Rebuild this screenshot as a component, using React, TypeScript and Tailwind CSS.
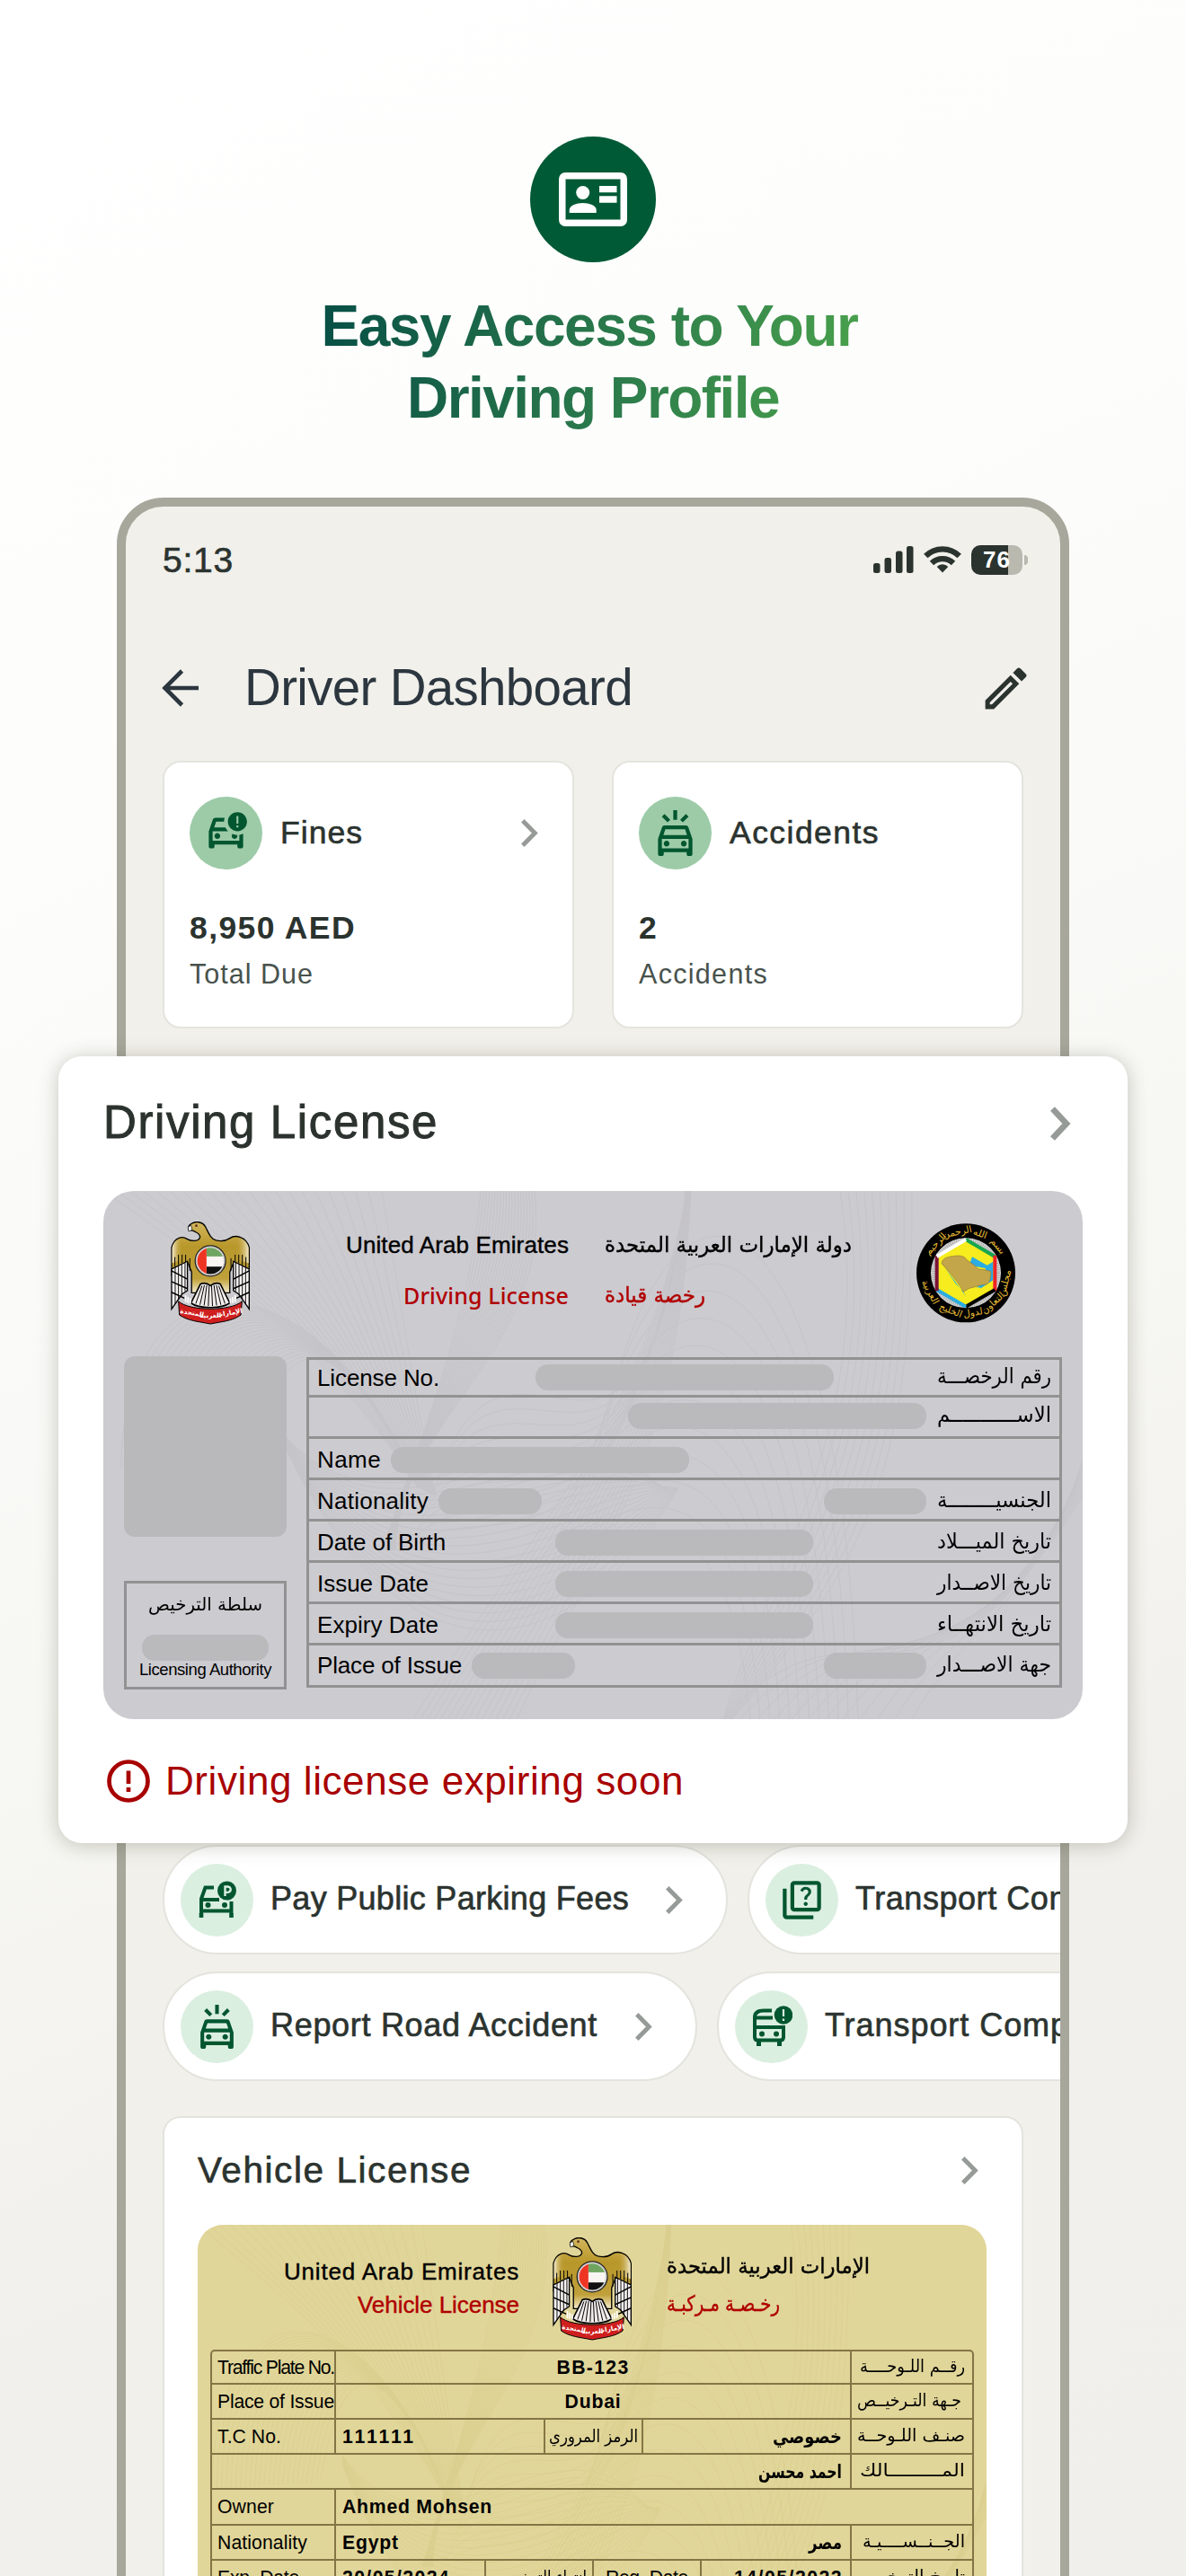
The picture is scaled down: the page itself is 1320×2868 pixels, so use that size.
import React, { useLayoutEffect, useRef } from 'react';
import {
  MdOutlineCarCrash,
  MdOutlineMinorCrash,
  MdOutlineModeEdit,
  MdOutlineQuiz,
} from 'react-icons/md';

const MEDIUM = '[-webkit-text-stroke:1px_currentColor]';
const MEDIUM_MD = '[-webkit-text-stroke:0.65px_currentColor]';
const MEDIUM_SM = '[-webkit-text-stroke:0.4px_currentColor]';

interface FitProps {
  w: number;
  children: string;
  ar?: boolean;
  className?: string;
}

// Sets a line of text to an exact width: tracking for latin, horizontal scale for arabic
// (tracking would break the joined letters).
function Fit({ w, children, ar, className = '' }: FitProps) {
  const ref = useRef<HTMLSpanElement>(null);

  useLayoutEffect(() => {
    const el = ref.current;
    if (!el) return;
    el.style.letterSpacing = '0px';
    el.style.transform = 'none';
    const natural = el.getBoundingClientRect().width;
    if (ar) {
      el.style.transform = `scaleX(${w / natural})`;
    } else {
      el.style.letterSpacing = `${(w - natural) / children.length}px`;
    }
  }, [w, ar, children]);

  return (
    <span className={`block shrink-0 text-left ${className}`} style={{ width: w }}>
      <span
        ref={ref}
        dir={ar ? 'rtl' : 'ltr'}
        className={`inline-block origin-left whitespace-nowrap ${ar ? "font-['DejaVu_Sans',sans-serif]" : ''}`}
      >
        {children}
      </span>
    </span>
  );
}

function Chevron({ w = 19, h = 31, stroke = 4.9 }: { w?: number; h?: number; stroke?: number }) {
  const d = stroke * 0.36;
  return (
    <svg width={w} height={h} viewBox={`0 0 ${w} ${h}`} fill="none" stroke="#969b98" strokeWidth={stroke} className="shrink-0">
      <path d={`M${d} ${d} L${w - stroke * 0.75} ${h / 2} L${d} ${h - d}`} />
    </svg>
  );
}

function IdCardIcon() {
  return (
    <svg width="76" height="60" viewBox="0 0 76 60">
      <rect x="3.75" y="3.75" width="68.5" height="52.5" rx="3.5" fill="none" stroke="#fff" strokeWidth="7.5" />
      <circle cx="26.7" cy="22.5" r="7.5" fill="#fff" />
      <path d="M11.7 45v-3.2c0-5 7.6-7.8 15-7.8s15 2.8 15 7.8V45z" fill="#fff" />
      <path d="M45 15h19.5v7.2H45zM45 26.3h19.5v7.4H45z" fill="#fff" />
    </svg>
  );
}

function ParkingIcon() {
  return (
    <svg width="44" height="42" viewBox="0 0 44 42" fill="none" stroke="#00562f" strokeWidth="4">
      <path d="M18 7.5H8.5L4 20v17M24 21H4M37.500 23v14M4 33.500h34" />
      <path d="M4 36v5M37.500 36v5" strokeWidth="4.6" strokeLinecap="butt" />
      <circle cx="11.500" cy="27" r="3" fill="#00562f" stroke="none" />
      <circle cx="30" cy="27" r="3" fill="#00562f" stroke="none" />
      <circle cx="32.500" cy="11" r="10.500" fill="#00562f" stroke="none" />
      <path d="M30.500 17V6.500h3a3.200 3.200 0 0 1 0 6.400h-3" stroke="#dbefe1" strokeWidth="2.400" />
    </svg>
  );
}

function BusAlertIcon() {
  return (
    <svg width="46" height="46" viewBox="0 0 46 46" fill="none" stroke="#00562f" strokeWidth="4">
      <path d="M23 5.500H14C7 5.500 4 8 4 13v22c0 2.500 1 3.500 3.500 3.500h25c2.500 0 3.500-1 3.500-3.500V24H4M24 13.500H4" />
      <path d="M8.500 38v7M31.500 38v7" strokeWidth="5" />
      <circle cx="12" cy="31.500" r="3" fill="#00562f" stroke="none" />
      <circle cx="28" cy="31.500" r="3" fill="#00562f" stroke="none" />
      <circle cx="36" cy="10.500" r="10.300" fill="#00562f" stroke="none" />
      <path d="M36 4v8M36 14.500v2.500" stroke="#dbefe1" strokeWidth="2.200" />
    </svg>
  );
}

function UaeEmblem() {
  const feathers = [0, 1, 2, 3];
  return (
    <svg width="88" height="115" viewBox="28 31 265 346" preserveAspectRatio="none" className="shrink-0">
      <defs>
        <linearGradient id="gold" x1="0" y1="0" x2="0" y2="1">
          <stop offset="0" stopColor="#d2b65c" />
          <stop offset="0.35" stopColor="#b8972a" />
          <stop offset="0.8" stopColor="#c0a03a" />
          <stop offset="1" stopColor="#f4eccc" />
        </linearGradient>
        <linearGradient id="wingL" x1="0" y1="0" x2="1" y2="0">
          <stop offset="0" stopColor="#f3ebd0" />
          <stop offset="0.7" stopColor="#b8972a" stopOpacity="0" />
        </linearGradient>
        <linearGradient id="wingR" x1="1" y1="0" x2="0" y2="0">
          <stop offset="0" stopColor="#f3ebd0" />
          <stop offset="0.7" stopColor="#b8972a" stopOpacity="0" />
        </linearGradient>
        <clipPath id="flagClip">
          <circle cx="161" cy="163" r="44" />
        </clipPath>
      </defs>
      <path
        d="M98 38C112 28 135 32 144 48C154 66 160 88 180 94C196 98 212 97 226 87C244 74 282 82 291 118V210L238 170L226 200V270H98V200L86 170L31 210V118C40 84 66 78 84 90C98 98 122 98 126 84C128 70 112 68 104 62C98 60 92 62 88 58C86 50 90 42 98 38Z"
        fill="url(#gold)" stroke="#000" strokeWidth="4"
      />
      <path d="M33 170V118C40 88 66 80 84 92V150z" fill="url(#wingL)" />
      <path d="M289 170V118C282 88 250 74 226 90V150z" fill="url(#wingR)" />
      <path d="M86 50l10-6 4 14-12 6z" fill="#fff" stroke="#000" strokeWidth="2" />
      <circle cx="114" cy="45" r="4" fill="#5a2b20" />
      <path d="M42 182v-32M54 176v-34M66 170v-28M78 166v-24M92 196v-42M280 182v-32M268 176v-34M256 170v-28M244 166v-24M230 196v-42" stroke="#000" strokeWidth="3" />
      <path d="M31 190L84 164V262L66 274L31 324zM291 190L238 164V262L256 274L291 324z" fill="#f6f2f2" stroke="#000" strokeWidth="4" />
      {feathers.map((i) => (
        <path key={i} d={`M${43 + i * 11} ${184 - i * 5}V${306 - i * 14}M${279 - i * 11} ${184 - i * 5}V${306 - i * 14}`} stroke="#000" strokeWidth="2.8" />
      ))}
      <path d="M31 196L84 224M31 232L84 256M31 268L74 288M291 196L238 224M291 232L238 256M291 268L248 288" stroke="#000" strokeWidth="4.5" />
      <path d="M128 240C142 234 154 240 161 246C168 240 180 234 194 240L226 304C200 324 122 324 96 304z" fill="#f1ecec" stroke="#000" strokeWidth="5" />
      <path d="M133 246L112 306M141 244L126 310M149 244L140 312M157 246L154 314M165 246L168 314M173 244L182 312M181 244L196 310M189 246L210 306" stroke="#000" strokeWidth="3" />
      <path d="M78 302V278M86 304V284M94 306V288M244 302V278M236 304V284M228 306V288" stroke="#fff" strokeWidth="5" />
      <path d="M54 298C90 332 232 332 267 298L263 344C236 364 200 366 161 374C122 366 86 364 57 344z" fill="#cf1f1f" stroke="#000" strokeWidth="3" />
      <g fill="#fff" fontSize="22" fontWeight="700" fontFamily="DejaVu Sans" textAnchor="middle">
        <text transform="translate(226 344) rotate(-10)">الإمارات</text>
        <text x="161" y="352">العربية</text>
        <text transform="translate(98 344) rotate(10)">المتحدة</text>
      </g>
      <circle cx="161" cy="163" r="51" fill="#ddd" stroke="#222" strokeWidth="4" />
      <g clipPath="url(#flagClip)">
        <rect x="115" y="117" width="92" height="92" fill="#f8f5f2" />
        <rect x="148" y="117" width="60" height="31" fill="#6fa561" />
        <rect x="148" y="182" width="60" height="30" fill="#111" />
        <rect x="115" y="117" width="33" height="92" fill="#ee3524" />
      </g>
      <circle cx="161" cy="163" r="48" fill="none" stroke="#8d8d8d" strokeWidth="3" strokeDasharray="4 5" />
    </svg>
  );
}

const gccTop: [string, number][] = [['بسم', 50], ['الله', 20], ['الرحمن', -12], ['الرحيم', -46]];
const gccBottom: [string, number][] = [['مجلس', -76], ['التعاون', -42], ['لدول', -10], ['الخليج', 22], ['العربية', 62]];

function GccEmblem() {
  return (
    <svg width="110" height="111" viewBox="0 0 330 333">
      <circle cx="165" cy="166" r="165" fill="#000" />
      <circle cx="165" cy="166" r="117" fill="#d5d5d5" />
      <circle cx="165" cy="166" r="108" fill="none" stroke="#a8a8a8" strokeWidth="12" strokeDasharray="3 4" />
      <path d="M165 55L262 111V222L165 277L68 222V111z" fill="#f7ec1d" />
      <path d="M76 136L96 150L150 222L168 250L216 216L256 190V128L236 140L186 112L176 140L230 150L236 180L200 216L160 232L130 200L96 150z" fill="#2bace2" />
      <path d="M84 134C86 118 100 112 122 110C142 106 160 108 168 122L196 142C204 154 214 154 222 154L248 160C250 180 244 200 234 204C214 204 200 212 184 216C174 214 164 228 156 228C146 206 130 188 112 166z" fill="#c3a54a" stroke="#8b7a3c" strokeWidth="2" />
      <path d="M158 230L186 216L212 214L216 226L192 244L168 256z" fill="#f7ec1d" />
      <g fill="none" strokeWidth="12">
        <path d="M165 54L262 111" stroke="#18a650" />
        <path d="M262 107V226" stroke="#ee2329" />
        <path d="M262 222L165 278" stroke="#000" />
        <path d="M165 278L68 222" stroke="#2bace2" />
        <path d="M68 226V107" stroke="#7a1338" />
        <path d="M68 111L165 54" stroke="#fff" />
      </g>
      <g fill="#e6bb35" fontFamily="DejaVu Sans" fontSize="32" textAnchor="middle">
        {gccTop.map(([word, deg]) => (
          <text key={word} x="165" y="36" transform={`rotate(${deg} 165 166)`}>{word}</text>
        ))}
        {gccBottom.map(([word, deg]) => (
          <text key={word} x="165" y="311" transform={`rotate(${deg} 165 166)`}>{word}</text>
        ))}
      </g>
    </svg>
  );
}

// Each family blends one bezier into another, eight numbers per curve.
const GUILLOCHE: [number[], number[], number][] = [
  [[0, 0, 160, 110, 260, 190, 350, 330], [310, 0, 330, 120, 350, 250, 370, 340], 22],
  [[20, 310, 20, 60, 240, 60, 350, 330], [170, 300, 200, 130, 270, 160, 350, 330], 24],
  [[420, 0, 410, 130, 360, 260, 310, 400], [480, 0, 500, 180, 330, 250, 325, 400], 20],
  [[380, 300, 460, 100, 600, 420, 648, 0], [340, 400, 420, 320, 560, 500, 652, 0], 10],
  [[560, 260, 620, -60, 820, -60, 840, 588], [480, 420, 640, 340, 700, 380, 720, 588], 12],
  [[650, 0, 600, 260, 500, 340, 345, 588], [654, 0, 640, 300, 560, 380, 460, 588], 16],
  [[200, 270, 330, 420, 500, 200, 620, 330], [200, 280, 330, 560, 520, 540, 640, 330], 20],
  [[820, 0, 860, 260, 740, 420, 690, 588], [900, 0, 900, 300, 860, 400, 700, 588], 10],
  [[900, 588, 960, 480, 1040, 460, 1090, 300], [690, 588, 840, 420, 900, 640, 1090, 340], 12],
];

function Guilloche({ color }: { color: string }) {
  const paths: string[] = [];
  GUILLOCHE.forEach(([a, b, n]) => {
    for (let i = 0; i < n; i++) {
      const p = a.map((v, k) => (v + ((b[k] - v) * i) / (n - 1)).toFixed(1));
      paths.push(`M${p[0]} ${p[1]}C${p.slice(2).join(' ')}`);
    }
  });
  return (
    <svg className="absolute inset-0 h-full w-full" viewBox="0 0 1090 588" preserveAspectRatio="none" fill="none" stroke={color} strokeWidth="1">
      <path d={paths.join('')} />
    </svg>
  );
}

const Blank = ({ w }: { w: number }) => <span className="block h-[29px] shrink-0 rounded-[14px] bg-[#bababc]" style={{ width: w }} />;

interface LicenseRow {
  h: string;
  label?: string;
  labelW?: number;
  ar?: string;
  left?: number;
  mid?: number;
  right?: number;
}

const licenseRows: LicenseRow[] = [
  { h: 'h-[42px]', label: 'License No.', labelW: 136, ar: 'رقم الرخصـــة', mid: 332 },
  { h: 'h-[46px] pb-[2px]', ar: 'الاســـــــــــم', right: 332 },
  { h: 'h-[46px] pt-[3px]', label: 'Name', labelW: 71, left: 332 },
  { h: 'h-[46px] pt-[3px]', label: 'Nationality', labelW: 124, ar: 'الجنسيــــــــة', left: 115, right: 114 },
  { h: 'h-[46px] pt-[3px]', label: 'Date of Birth', labelW: 143, ar: 'تاريخ الميـــلاد', mid: 287 },
  { h: 'h-[46px] pt-[3px]', label: 'Issue Date', labelW: 124, ar: 'تاريخ الاصــدار', mid: 287 },
  { h: 'h-[46px] pt-[3px]', label: 'Expiry Date', labelW: 135, ar: 'تاريخ الانتهــاء', mid: 287 },
  { h: 'h-[44px]', label: 'Place of Issue', labelW: 161, ar: 'جهة الاصـــدار', left: 115, right: 114 },
];

function DrivingLicenseCard() {
  return (
    <div className="relative h-[588px] w-[1090px] overflow-hidden rounded-[34px] bg-[#cccbd0] text-black">
      <Guilloche color="#c5c4c9" />
      <div className="relative flex h-[185px] pt-[34px] pl-[75px]">
        <UaeEmblem />
        <div className="flex w-[355px] flex-col items-end pt-[6px] text-[26px] leading-[56px]">
          <Fit w={248} className={`-mt-[8px] ${MEDIUM_SM}`}>United Arab Emirates</Fit>
          <Fit w={184} className="font-['Noto_Sans'] text-[25px] font-medium text-[#b00000]">Driving License</Fit>
        </div>
        <div className="ml-[40px] w-[347px] pt-[6px] text-[24px] leading-[56px]">
          <Fit ar w={275} className={`-mt-[8px] ${MEDIUM_SM}`}>دولة الإمارات العربية المتحدة</Fit>
          <Fit ar w={112} className={`text-[#b00000] ${MEDIUM_SM}`}>رخصة قيادة</Fit>
        </div>
        <div className="pt-[2px]">
          <GccEmblem />
        </div>
      </div>

      <div className="relative flex items-start gap-[22px] pl-[23px]">
        <div className="w-[181px]">
          <div className="-mt-px h-[201px] rounded-xl bg-[#b9b9bb]" />
          <div className="mt-[49px] flex h-[121px] flex-col items-center border-[3px] border-[#929293] pt-[9px]">
            <Fit ar w={127} className="text-[20px] leading-[28px]">سلطة الترخيص</Fit>
            <span className="mt-5 block h-[29px] w-[141px] rounded-[14px] bg-[#bababc]" />
            <Fit w={147} className="text-[18.5px] leading-[20px]">Licensing Authority</Fit>
          </div>
        </div>

        <div className="w-[841px] border-[3px] border-[#929293] text-[26px]">
          {licenseRows.map((row, i) => (
            <div
              key={i}
              className={`grid grid-cols-[1fr_auto_1fr] items-center pr-[9px] pl-[9px] ${row.h} ${i < licenseRows.length - 1 ? 'border-b-[3px] border-[#929293]' : ''}`}
            >
              <div className="flex items-center gap-[11px]">
                {row.label && <Fit w={row.labelW || 0} className="leading-[38px]">{row.label}</Fit>}
                {row.left && <Blank w={row.left} />}
              </div>
              <div>{row.mid && <Blank w={row.mid} />}</div>
              <div className="flex items-center justify-end gap-3">
                {row.right && <Blank w={row.right} />}
                {row.ar && <Fit ar w={127} className="-mt-[3px] text-[23.5px] leading-[34px]">{row.ar}</Fit>}
              </div>
            </div>
          ))}
        </div>
      </div>
    </div>
  );
}

function DrivingLicenseSheet() {
  return (
    <section className="absolute top-[1176px] left-[65px] h-[876px] w-[1190px] rounded-[26px] bg-white pt-[40px] pl-[50px] shadow-[0_2px_22px_rgba(60,60,40,0.28)]">
      <div className="flex h-[70px] items-center justify-between pr-[63px] text-[51px] text-[#2c332f]">
        <Fit w={373} className={`-mt-[2px] leading-[70px] ${MEDIUM}`}>Driving License</Fit>
        <Chevron w={23} h={38} stroke={6.8} />
      </div>
      <div className="mt-10">
        <DrivingLicenseCard />
      </div>
      <div className="mt-[39px] ml-1 flex h-[60px] items-center gap-[17px] text-[44px] leading-[60px] text-[#a80000]">
        <svg width="48" height="48" viewBox="0 0 48 48" fill="none" stroke="#a80000" strokeWidth="4.7">
          <circle cx="24" cy="24" r="21.5" />
          <path d="M24 12.5v14.5M24 31v5" />
        </svg>
        <Fit w={577}>Driving license expiring soon</Fit>
      </div>
    </section>
  );
}

function StatusBar() {
  return (
    <div className="flex h-[60px] items-center justify-between pr-[36px] pl-[41px] text-[#2b332f]">
      <Fit w={79} className={`pt-[2px] text-[39px] leading-[60px] ${MEDIUM_MD}`}>5:13</Fit>
      <div className="flex items-center">
        <svg width="45" height="30" viewBox="0 0 45 30" fill="#2b332f">
          <rect x="0" y="19" width="7.5" height="11" rx="2.5" />
          <rect x="12.5" y="13" width="7.5" height="17" rx="2.5" />
          <rect x="25" y="5.5" width="7.5" height="24.5" rx="2.5" />
          <rect x="37" y="0" width="7.5" height="30" rx="2.5" />
        </svg>
        <svg className="ml-[11px]" width="42" height="30" viewBox="0 0 42 30" fill="none" stroke="#2b332f" strokeWidth="6.3">
          <path d="M2.3 11a26.5 26.5 0 0 1 37.4 0" />
          <path d="M9 19a17 17 0 0 1 24 0" />
          <path d="M21 29.5l-6.3-6.6a9 9 0 0 1 12.6 0z" fill="#2b332f" stroke="none" />
        </svg>
        <div className="ml-[11px] flex h-[33px] w-[57px] items-center justify-center overflow-hidden rounded-[10px] bg-[linear-gradient(90deg,#2b332f_41px,#b9b9b0_41px)] text-[26px] leading-[33px] font-bold text-white">
          <Fit w={31}>76</Fit>
        </div>
        <div className="ml-[2px] h-[11px] w-[4px] rounded-r-full bg-[#b9b9b0]" />
      </div>
    </div>
  );
}

interface SummaryCardProps {
  icon: React.ReactNode;
  title: string;
  titleW: number;
  value: string;
  valueW: number;
  note: string;
  noteW: number;
  arrow?: boolean;
}

function SummaryCard({ icon, title, titleW, value, valueW, note, noteW, arrow }: SummaryCardProps) {
  return (
    <div className="h-[298px] w-[458px] rounded-[20px] border-2 border-[#e4e4de] bg-white pt-[38px] pl-[28px] text-[#2b332f]">
      <div className="flex h-[81px] items-center pr-[38px]">
        <span className="flex size-[81px] items-center justify-center rounded-full bg-[#9dcba8] text-[#00562f]">{icon}</span>
        <Fit w={titleW} className={`ml-[20px] text-[35.5px] leading-[81px] ${MEDIUM_MD}`}>{title}</Fit>
        <span className="ml-auto">{arrow && <Chevron />}</span>
      </div>
      <Fit w={valueW} className="mt-[45px] text-[35.5px] leading-[40px] font-bold">{value}</Fit>
      <Fit w={noteW} className="mt-[11px] text-[30.5px] leading-[40px] text-[#48524d]">{note}</Fit>
    </div>
  );
}

function ActionPill({ icon, label, labelW, width }: { icon: React.ReactNode; label: string; labelW: number; width: string }) {
  return (
    <div className={`flex h-[122px] shrink-0 items-center rounded-full border-2 border-[#e4e4de] bg-white pr-[48px] pl-[18px] ${width}`}>
      <span className="flex size-[81px] shrink-0 items-center justify-center rounded-full bg-[#dbefe1] text-[#00562f]">{icon}</span>
      <Fit w={labelW} className={`-mt-[3px] ml-[19px] text-[36px] leading-[81px] text-[#2b332f] ${MEDIUM_MD}`}>{label}</Fit>
      <span className="ml-auto"><Chevron /></span>
    </div>
  );
}

const LINE = 'border-[#847545]';

function RowLabel({ w, children }: { w?: number; children?: string }) {
  return (
    <div className={`flex w-[138px] shrink-0 items-center border-r-2 pl-[6px] ${LINE}`}>
      {children && <Fit w={w || 0}>{children}</Fit>}
    </div>
  );
}

function RowLabelAr({ w, children, inset = 'pr-2' }: { w: number; children: string; inset?: string }) {
  return (
    <div className={`flex w-[136px] shrink-0 items-center justify-end border-l-2 pb-[2px] text-[19.5px] ${inset} ${LINE}`}>
      <Fit ar w={w}>{children}</Fit>
    </div>
  );
}

function VehicleLicenseCard() {
  const row = `flex border-b-2 ${LINE}`;
  return (
    <div className="relative h-[560px] w-[878px] overflow-hidden rounded-[28px] bg-[#e1d699] text-black">
      <Guilloche color="#dbcf90" />
      <div className="relative flex h-[139px] pt-[14px]">
        <div className="flex w-[358px] flex-col items-end pt-[20px] text-[26px] leading-[37px]">
          <Fit w={262} className={MEDIUM_SM}>United Arab Emirates</Fit>
          <Fit w={180} className={`text-[#b00000] ${MEDIUM_SM}`}>Vehicle License</Fit>
        </div>
        <div className="ml-[37px]">
          <UaeEmblem />
        </div>
        <div className="ml-[39px] pt-[11px] text-[24px] leading-[42px]">
          <Fit ar w={226} className={MEDIUM_SM}>الإمارات العربية المتحدة</Fit>
          <Fit ar w={126} className={`text-[#b00000] ${MEDIUM_SM}`}>رخـصـة مـركبـة</Fit>
        </div>
      </div>

      <div className={`relative mx-[14px] rounded-[5px] border-2 text-[21.2px] ${LINE}`}>
        <div className={`${row} h-[37px]`}>
          <RowLabel w={130}>Traffic Plate No.</RowLabel>
          <div className="flex flex-1 items-center justify-center font-bold"><Fit w={81}>BB-123</Fit></div>
          <RowLabelAr w={117}>رقــم اللـوحــــة</RowLabelAr>
        </div>
        <div className={`${row} h-[39px]`}>
          <RowLabel w={130}>Place of Issue</RowLabel>
          <div className="flex flex-1 items-center justify-center font-bold"><Fit w={63}>Dubai</Fit></div>
          <RowLabelAr w={116} inset="pr-3">جـهة التـرخيــص</RowLabelAr>
        </div>
        <div className={`${row} h-[39px]`}>
          <RowLabel w={71}>T.C No.</RowLabel>
          <div className={`flex w-[233px] items-center border-r-2 pl-[7px] font-bold ${LINE}`}><Fit w={82}>111111</Fit></div>
          <div className={`flex w-[109px] items-center justify-center border-r-2 text-[19.5px] ${LINE}`}><Fit ar w={99}>الرمز المروري</Fit></div>
          <div className="flex flex-1 items-center justify-end pr-[9px] font-bold"><Fit ar w={77}>خصوصي</Fit></div>
          <RowLabelAr w={120}>صنـف اللـوحــة</RowLabelAr>
        </div>
        <div className={`${row} h-[39px]`}>
          <div className="flex flex-1 items-center justify-end pr-[9px] font-bold"><Fit ar w={93}>احمد محسن</Fit></div>
          <RowLabelAr w={117}>المـــــــــالك</RowLabelAr>
        </div>
        <div className={`${row} h-[40px]`}>
          <RowLabel w={63}>Owner</RowLabel>
          <div className="flex flex-1 items-center pl-[7px] font-bold"><Fit w={167}>Ahmed Mohsen</Fit></div>
        </div>
        <div className={`${row} h-[39px]`}>
          <RowLabel w={100}>Nationality</RowLabel>
          <div className="flex flex-1 items-center pl-[7px] font-bold"><Fit w={63}>Egypt</Fit></div>
          <div className="flex flex-1 items-center justify-end pr-[9px] font-bold"><Fit ar w={37}>مصر</Fit></div>
          <RowLabelAr w={114}>الجــنــســــيـة</RowLabelAr>
        </div>
        <div className={`${row} h-[39px]`}>
          <RowLabel w={91}>Exp. Date</RowLabel>
          <div className={`flex w-[167px] items-center border-r-2 pl-[7px] font-bold ${LINE}`}><Fit w={120}>20/05/2024</Fit></div>
          <div className={`flex w-[120px] items-center justify-end border-r-2 pr-[6px] text-[19.5px] ${LINE}`}><Fit ar w={98}>انتهاء الترخيص</Fit></div>
          <div className={`flex w-[120px] items-center justify-center border-r-2 ${LINE}`}><Fit w={92}>Reg. Date</Fit></div>
          <div className="flex flex-1 items-center justify-end pr-[8px] font-bold"><Fit w={121}>14/05/2022</Fit></div>
          <RowLabelAr w={116}>تاريخ الترخيص</RowLabelAr>
        </div>
      </div>
    </div>
  );
}

export default function App() {
  return (
    <main className="relative h-[2868px] w-[1320px] overflow-hidden bg-[linear-gradient(155deg,#ffffff_0%,#fdfdfc_25%,#f8f9f5_50%,#f2f0ec_75%,#f1efeb_100%)] font-['Liberation_Sans',sans-serif]">
      <header className="flex h-[554px] flex-col items-center pt-[152px]">
        <div className="flex size-[140px] items-center justify-center rounded-full bg-[#005a36]">
          <IdCardIcon />
        </div>
        <h1 className="mt-[31px] mr-[8px] flex flex-col items-center bg-[linear-gradient(100deg,#074f46_0%,#2c7b4b_55%,#4aa24c_100%)] bg-clip-text text-[64px] leading-[80px] font-bold text-transparent">
          <Fit w={597}>Easy Access to Your</Fit>
          <Fit w={414} className="ml-[8px]">Driving Profile</Fit>
        </h1>
      </header>

      <div className="mx-auto h-[2400px] w-[1060px] overflow-hidden rounded-t-[52px] border-[10px] border-[#a7a79c] bg-[#f1f0eb]">
        <div className="mt-[29px]">
          <StatusBar />
        </div>

        <div className="mt-[78px] flex h-[70px] items-center pr-[30px] pl-[40px] text-[#2c363f]">
          <svg width="42" height="42" viewBox="0 0 42 42" fill="none" stroke="#2c363f" strokeWidth="4.6">
            <path d="M41 21H4M22.5 2L3.5 21L22.5 40" />
          </svg>
          <Fit w={432} className="ml-[50px] text-[56.5px] leading-[70px]">Driver Dashboard</Fit>
          <MdOutlineModeEdit size={61} className="ml-auto text-[#2b332f]" />
        </div>

        <div className="mt-[46px] flex gap-[42px] pl-[41px]">
          <SummaryCard icon={<MdOutlineCarCrash size={51} />} title="Fines" titleW={92} value="8,950 AED" valueW={185} note="Total Due" noteW={138} arrow />
          <SummaryCard icon={<MdOutlineMinorCrash size={51} />} title="Accidents" titleW={167} value="2" valueW={22} note="Accidents" noteW={144} />
        </div>

        <div className="mt-[909px] flex flex-col gap-[19px] pl-[41px]">
          <div className="flex gap-[22px]">
            <ActionPill icon={<ParkingIcon />} label="Pay Public Parking Fees" labelW={399} width="w-[629px]" />
            <ActionPill icon={<MdOutlineQuiz size={51} />} label="Transport Con" labelW={236} width="w-[629px]" />
          </div>
          <div className="flex gap-[22px]">
            <ActionPill icon={<MdOutlineMinorCrash size={49} />} label="Report Road Accident" labelW={364} width="w-[595px]" />
            <ActionPill icon={<BusAlertIcon />} label="Transport Comp" labelW={272} width="w-[629px]" />
          </div>
        </div>

        <div className="mt-[39px] ml-[41px] h-[620px] w-[958px] rounded-t-[20px] border-2 border-[#e4e4de] bg-white pt-[28px] pl-[37px]">
          <div className="flex h-[60px] items-center justify-between pr-[48px] text-[40.5px] leading-[60px] text-[#2b332f]">
            <Fit w={305} className={MEDIUM_MD}>Vehicle License</Fit>
            <Chevron />
          </div>
          <div className="mt-[31px]">
            <VehicleLicenseCard />
          </div>
        </div>
      </div>

      <DrivingLicenseSheet />
    </main>
  );
}
